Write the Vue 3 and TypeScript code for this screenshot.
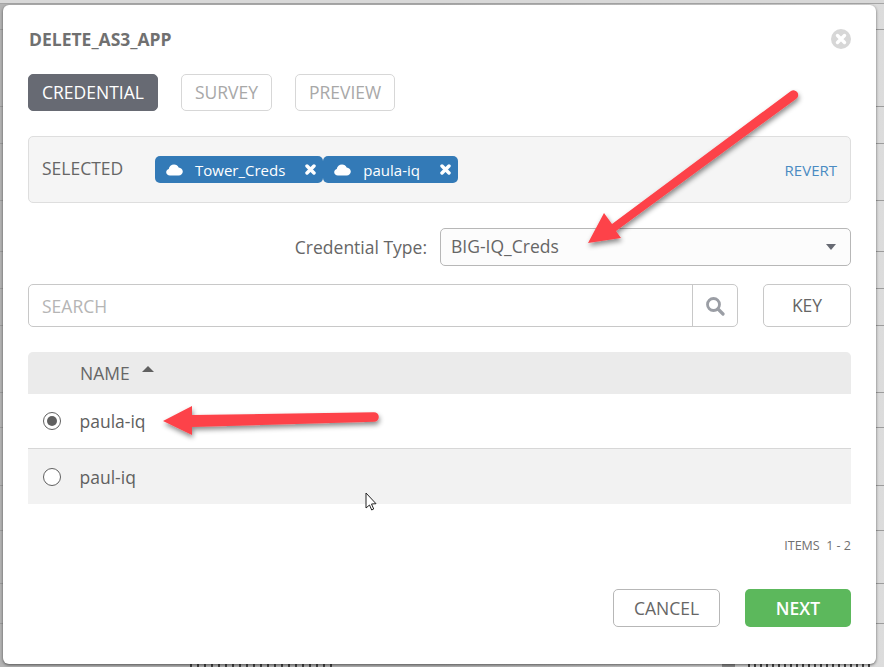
<script setup lang="ts">
type Row = { name: string; selected: boolean }

const steps = [
  { label: 'CREDENTIAL', active: true },
  { label: 'SURVEY', active: false },
  { label: 'PREVIEW', active: false },
]

const chips = ['Tower_Creds', 'paula-iq']

const rows: Row[] = [
  { name: 'paula-iq', selected: true },
  { name: 'paul-iq', selected: false },
]

// table rules of the page behind the dialog, showing in the margins
const backLines = [29, 106, 143, 200, 251, 288, 325, 392, 427, 485, 530, 583, 623]
</script>

<template>
  <div class="page">
    <div class="backdrop">
      <i v-for="y in backLines" :key="y" class="back-line" :style="{ top: y + 'px' }"></i>
      <i class="back-scrap left"></i>
      <i class="back-scrap box"></i>
      <i class="back-scrap right"></i>
    </div>

    <div class="modal">
      <header class="head">
        <h1>DELETE_AS3_APP</h1>
        <span class="close">
          <svg viewBox="0 0 20 20" width="20" height="20">
            <circle cx="10" cy="10" r="10" fill="#d7d7d7" />
            <path d="M6.500 6.500l7 7M13.500 6.500l-7 7" stroke="#fff" stroke-width="3.400" stroke-linecap="round" />
          </svg>
        </span>
      </header>

      <nav class="steps">
        <button v-for="step in steps" :key="step.label" class="step" :class="{ active: step.active }">
          {{ step.label }}
        </button>
      </nav>

      <section class="selected">
        <span class="selected-label">SELECTED</span>
        <div class="chips">
          <span v-for="chip in chips" :key="chip" class="chip">
            <svg class="cloud" viewBox="0 0 18 13" width="17" height="12">
              <path d="M4 12.500C1.800 12.500 0 11 0 9c0-1.700 1.100-3 2.800-3.500C3.100 2.500 5.500.5 8.500.5c2.300 0 4.200 1.200 5 3.200 2.300.2 4.500 2 4.500 4.500 0 2.400-2 4.300-4.500 4.300z" fill="#fff" />
            </svg>
            <span class="chip-name">{{ chip }}</span>
            <svg class="chip-x" viewBox="0 0 12 12" width="11" height="11">
              <path d="M2.200 2.200l7.600 7.600M9.800 2.200l-7.600 7.600" stroke="#fff" stroke-width="3.800" stroke-linecap="round" />
            </svg>
          </span>
        </div>
        <a class="revert">REVERT</a>
      </section>

      <div class="type-row">
        <label>Credential Type:</label>
        <div class="select">
          <span>BIG-IQ_Creds</span>
          <i class="caret"></i>
        </div>
      </div>

      <div class="search-row">
        <div class="search">
          <span class="placeholder">SEARCH</span>
          <span class="search-btn">
            <svg viewBox="0 0 20 20" width="20" height="20">
              <circle cx="8.500" cy="8.500" r="6" fill="none" stroke="#9b9ea5" stroke-width="2.800" />
              <path d="M13 13l5 5" stroke="#9b9ea5" stroke-width="3.200" stroke-linecap="round" />
            </svg>
          </span>
        </div>
        <button class="key">KEY</button>
      </div>

      <div class="table">
        <div class="thead">
          <span>NAME</span>
          <i class="sort"></i>
        </div>
        <div v-for="row in rows" :key="row.name" class="row" :class="{ on: row.selected }">
          <span class="radio"><b v-if="row.selected"></b></span>
          <span class="row-name">{{ row.name }}</span>
        </div>
      </div>

      <div class="items">ITEMS &nbsp;1 - 2</div>

      <footer class="foot">
        <button class="cancel">CANCEL</button>
        <button class="next">NEXT</button>
      </footer>
    </div>

    <!-- screenshot annotations drawn over the dialog -->
    <svg class="marks" width="884" height="667" viewBox="0 0 884 667">
      <defs>
        <filter id="sh" x="-20%" y="-20%" width="140%" height="140%">
          <feDropShadow dx="1" dy="3" stdDeviation="2.500" flood-color="#000" flood-opacity="0.45" />
        </filter>
      </defs>
      <g filter="url(#sh)" fill="#fd4349">
        <path d="M604 213l8 11 179-133a4 4 0 0 1 5 8L616 231l5 7-33 5z" />
        <path d="M163 421l29-15v9l182-2.800a4.800 4.800 0 0 1 0 9.600L192 427v8z" />
      </g>
      <path d="M366 493v15l3.500-3 2.200 5 2-1-2.200-5 4.500-.3z" fill="#fff" stroke="#222" stroke-width="1" />
    </svg>
  </div>
</template>

<style>
html, body {
  margin: 0;
  overflow: hidden;
}
</style>

<style scoped>
.page {
  position: relative;
  width: 884px;
  height: 667px;
  box-sizing: border-box;
  padding: 5px 8px 3px 3px;
  background: linear-gradient(90deg, #b4b4b4 0, #b4b4b4 50%, #dcdcdc 100%);
  font-family: "Open Sans", sans-serif;
  color: #606060;
  overflow: hidden;
}

.backdrop {
  position: absolute;
  inset: 0;
}

.backdrop::before {
  content: "";
  position: absolute;
  left: 0;
  right: 0;
  top: 0;
  height: 4px;
  background: #d8d8d8;
  border-bottom: 1px solid #a5a5a5;
  box-sizing: border-box;
}

.back-line {
  position: absolute;
  left: 0;
  right: 0;
  height: 1px;
  background: #9c9c9c;
}

/* tops of the illegible words on the page behind, cut by the window edge */
.back-scrap {
  position: absolute;
  top: 664px;
  height: 3px;
}

.back-scrap.left {
  left: 190px;
  width: 143px;
  background: repeating-linear-gradient(90deg, #444 0 2px, transparent 2px 7px);
}

.back-scrap.box {
  left: 722px;
  width: 13px;
  background: #8a8a8a;
}

.back-scrap.right {
  left: 748px;
  width: 122px;
  background: repeating-linear-gradient(90deg, #444 0 2px, transparent 2px 6px);
}

.modal {
  position: relative;
  width: 873px;
  height: 659px;
  box-sizing: border-box;
  padding: 19px 25px 0;
  background: #fff;
  border-radius: 6px;
  box-shadow: 0 1px 3px rgba(0, 0, 0, .55);
}

.head {
  display: flex;
  justify-content: space-between;
  align-items: center;
  height: 30px;
}

h1 {
  margin: 0 0 0 1px;
  font-size: 17.5px;
  font-weight: 700;
  color: #707070;
}

.close {
  display: flex;
}

.steps {
  display: flex;
  gap: 23px;
  margin-top: 20px;
}

button {
  font-family: inherit;
  box-sizing: border-box;
  background: #fff;
  cursor: pointer;
}

.step {
  height: 37px;
  padding: 0 13px 2px;
  font-size: 17.5px;
  color: #a8a8a8;
  border: 1px solid #d7d7d7;
  border-radius: 5px;
}

.step.active {
  background: #676a73;
  border-color: #676a73;
  color: #fff;
}

.selected {
  display: flex;
  align-items: center;
  height: 67px;
  box-sizing: border-box;
  margin-top: 25px;
  padding: 0 13px;
  background: #f5f5f5;
  border: 1px solid #dedede;
  border-radius: 5px;
}

.selected-label {
  width: 113px;
  margin-top: -4px;
  font-size: 17.5px;
  color: #666;
}

.chips {
  display: flex;
  flex: 1;
}

.chip {
  display: flex;
  align-items: center;
  height: 27px;
  padding: 0 7px 0 11px;
  background: #337ab7;
  border-radius: 5px;
  color: #fff;
  font-size: 15px;
}

.chip-name {
  margin-left: 12px;
  margin-right: 20px;
}

.revert {
  font-size: 15px;
  color: #4a8bc2;
}

.type-row {
  display: flex;
  justify-content: flex-end;
  align-items: center;
  gap: 13px;
  margin-top: 25px;
  font-size: 17.5px;
  color: #666;
}

.select {
  display: flex;
  justify-content: space-between;
  align-items: center;
  width: 411px;
  height: 38px;
  box-sizing: border-box;
  padding: 0 14px 2px 10px;
  background: #fcfcfc;
  border: 1px solid #b7b7b7;
  border-radius: 5px;
}

.caret {
  width: 0;
  height: 0;
  margin-top: 2px;
  border-left: 5px solid transparent;
  border-right: 5px solid transparent;
  border-top: 6px solid #676a73;
}

.search-row {
  display: flex;
  gap: 25px;
  margin-top: 18px;
}

.search {
  display: flex;
  justify-content: space-between;
  align-items: center;
  flex: 1;
  height: 43px;
  box-sizing: border-box;
  padding-left: 13px;
  border: 1px solid #c8c8c8;
  border-radius: 5px;
}

.placeholder {
  font-size: 17.5px;
  color: #b5b5b5;
}

.search-btn {
  display: flex;
  align-items: center;
  justify-content: center;
  width: 44px;
  height: 100%;
  border-left: 1px solid #c8c8c8;
}

.key {
  width: 88px;
  height: 43px;
  padding-bottom: 2px;
  font-size: 17.5px;
  color: #666;
  border: 1px solid #c8c8c8;
  border-radius: 5px;
}

.table {
  margin-top: 25px;
}

.thead {
  display: flex;
  align-items: center;
  gap: 12px;
  height: 42px;
  padding-left: 52px;
  background: #ebebeb;
  border-radius: 5px 5px 0 0;
  font-size: 17.5px;
  color: #666;
}

.sort {
  width: 0;
  height: 0;
  margin-bottom: 8px;
  border-left: 6px solid transparent;
  border-right: 6px solid transparent;
  border-bottom: 6px solid #606060;
}

.row {
  display: flex;
  align-items: center;
  height: 55px;
  box-sizing: border-box;
  padding-left: 15px;
  background: #f2f2f2;
  font-size: 17.5px;
}

.row.on {
  background: #fff;
  border-bottom: 1px solid #d7d7d7;
}

.radio {
  display: flex;
  align-items: center;
  justify-content: center;
  width: 18px;
  height: 18px;
  box-sizing: border-box;
  border: 1px solid #606060;
  border-radius: 50%;
  background: #fff;
}

.radio b {
  width: 10px;
  height: 10px;
  border-radius: 50%;
  background: #606060;
}

.row-name {
  margin-left: 18.500px;
}

.items {
  margin-top: 33px;
  text-align: right;
  font-size: 12.5px;
  color: #707070;
}

.foot {
  display: flex;
  justify-content: flex-end;
  gap: 25px;
  margin-top: 35px;
}

.cancel, .next {
  width: 106px;
  height: 38px;
  font-size: 17.5px;
  border-radius: 5px;
}

.cancel {
  width: 107px;
  color: #666;
  border: 1px solid #b7b7b7;
}

.next {
  color: #fff;
  font-weight: 600;
  background: #5cb85c;
  border: 0;
}

.marks {
  position: absolute;
  left: 0;
  top: 0;
  pointer-events: none;
}
</style>
